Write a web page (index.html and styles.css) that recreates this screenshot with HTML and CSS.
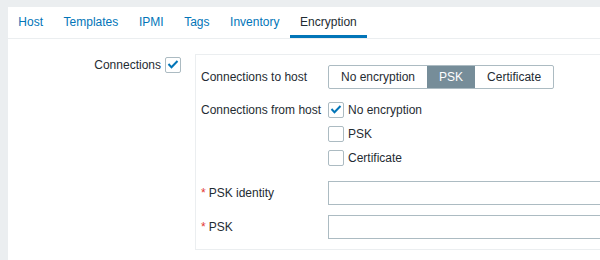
FILE: index.html
```html
<!DOCTYPE html>
<html lang="en">
<head>
    <meta charset="UTF-8">
    <meta name="viewport" content="width=device-width, initial-scale=1.0">
    <title>Host - Encryption</title>
    <link rel="stylesheet" href="styles.css">
</head>
<body>
    <div class="panel">
        <ul class="tabs">
            <li><a href="#">Host</a></li>
            <li><a href="#">Templates</a></li>
            <li><a href="#">IPMI</a></li>
            <li><a href="#">Tags</a></li>
            <li><a href="#">Inventory</a></li>
            <li class="active"><a href="#">Encryption</a></li>
        </ul>

        <div class="form">
            <div class="form-label">
                Connections
                <span class="checkbox"><svg width="14" height="14" viewBox="0 0 14 14"><polyline points="2.5,6 5.5,9.3 11.5,3" fill="none" stroke="#0275b8" stroke-width="2"/></svg></span>
            </div>

            <div class="fieldset">
                <div class="row row-host">
                    <label>Connections to host</label>
                    <div class="segmented">
                        <span>No encryption</span>
                        <span class="selected">PSK</span>
                        <span>Certificate</span>
                    </div>
                </div>
                <div class="row row-from">
                    <label>Connections from host</label>
                    <ul class="check-list">
                        <li><span class="checkbox"><svg width="14" height="14" viewBox="0 0 14 14"><polyline points="2.5,6 5.5,9.3 11.5,3" fill="none" stroke="#0275b8" stroke-width="2"/></svg></span>No encryption</li>
                        <li><span class="checkbox"></span>PSK</li>
                        <li><span class="checkbox"></span>Certificate</li>
                    </ul>
                </div>
                <div class="row row-identity">
                    <label class="required">PSK identity</label>
                    <input type="text">
                </div>
                <div class="row">
                    <label class="required">PSK</label>
                    <input type="text">
                </div>
            </div>
        </div>
    </div>
</body>
</html>
```

FILE: styles.css
```css
html, body { height: 100%; }
body { margin: 0; padding: 7px 0 0 8px; box-sizing: border-box; background: #ebeef0; font-family: "Liberation Sans", Arial, sans-serif; font-size: 12px; color: #1f2c33; overflow: hidden; }
.panel { background: #fff; width: calc(100vw - 8px); height: 100%; overflow: hidden; }

.tabs { list-style: none; margin: 0; padding: 0; display: flex; height: 31px; border-bottom: 1px solid #ebeef0; }
.tabs li { padding: 0 10.3px; line-height: 31px; white-space: nowrap; }
.tabs a { color: #0275b8; text-decoration: none; }
.tabs .active { box-shadow: inset 0 -3px 0 #0275b8; }
.tabs .active a { color: #1f2c33; }

.form { display: flex; align-items: flex-start; padding-top: 15px; }
.form-label { width: 173px; flex-shrink: 0; margin: 3px 14px 0 0; display: flex; justify-content: flex-end; align-items: center; gap: 4px; }

.checkbox { width: 16px; height: 16px; box-sizing: border-box; border: 1px solid #acbbc2; border-radius: 2px; display: inline-flex; flex-shrink: 0; }

.fieldset { width: 500px; flex-shrink: 0; border: 1px solid #ebeef0; padding: 10px 0 10px 5px; }
.row { display: flex; align-items: flex-start; }
.row label { width: 127px; flex-shrink: 0; line-height: 24px; }
.row-host { margin-bottom: 9px; }
.row-from { margin-bottom: 11px; }
.row-identity { margin-bottom: 10px; }
.required::before { content: "*"; color: #e33734; margin-right: 3px; }

.segmented { display: inline-flex; border: 1px solid #acbbc2; border-radius: 2px; overflow: hidden; }
.segmented span { padding: 0 12px; line-height: 22px; }
.segmented .selected { background: #768d99; color: #fff; }

.check-list { list-style: none; margin: 0; padding: 0; }
.check-list li { height: 24px; display: flex; align-items: center; gap: 4px; }

input { width: 320px; height: 24px; box-sizing: border-box; margin: 0; padding: 0 5px; border: 1px solid #acbbc2; border-radius: 0; font: inherit; }
```
